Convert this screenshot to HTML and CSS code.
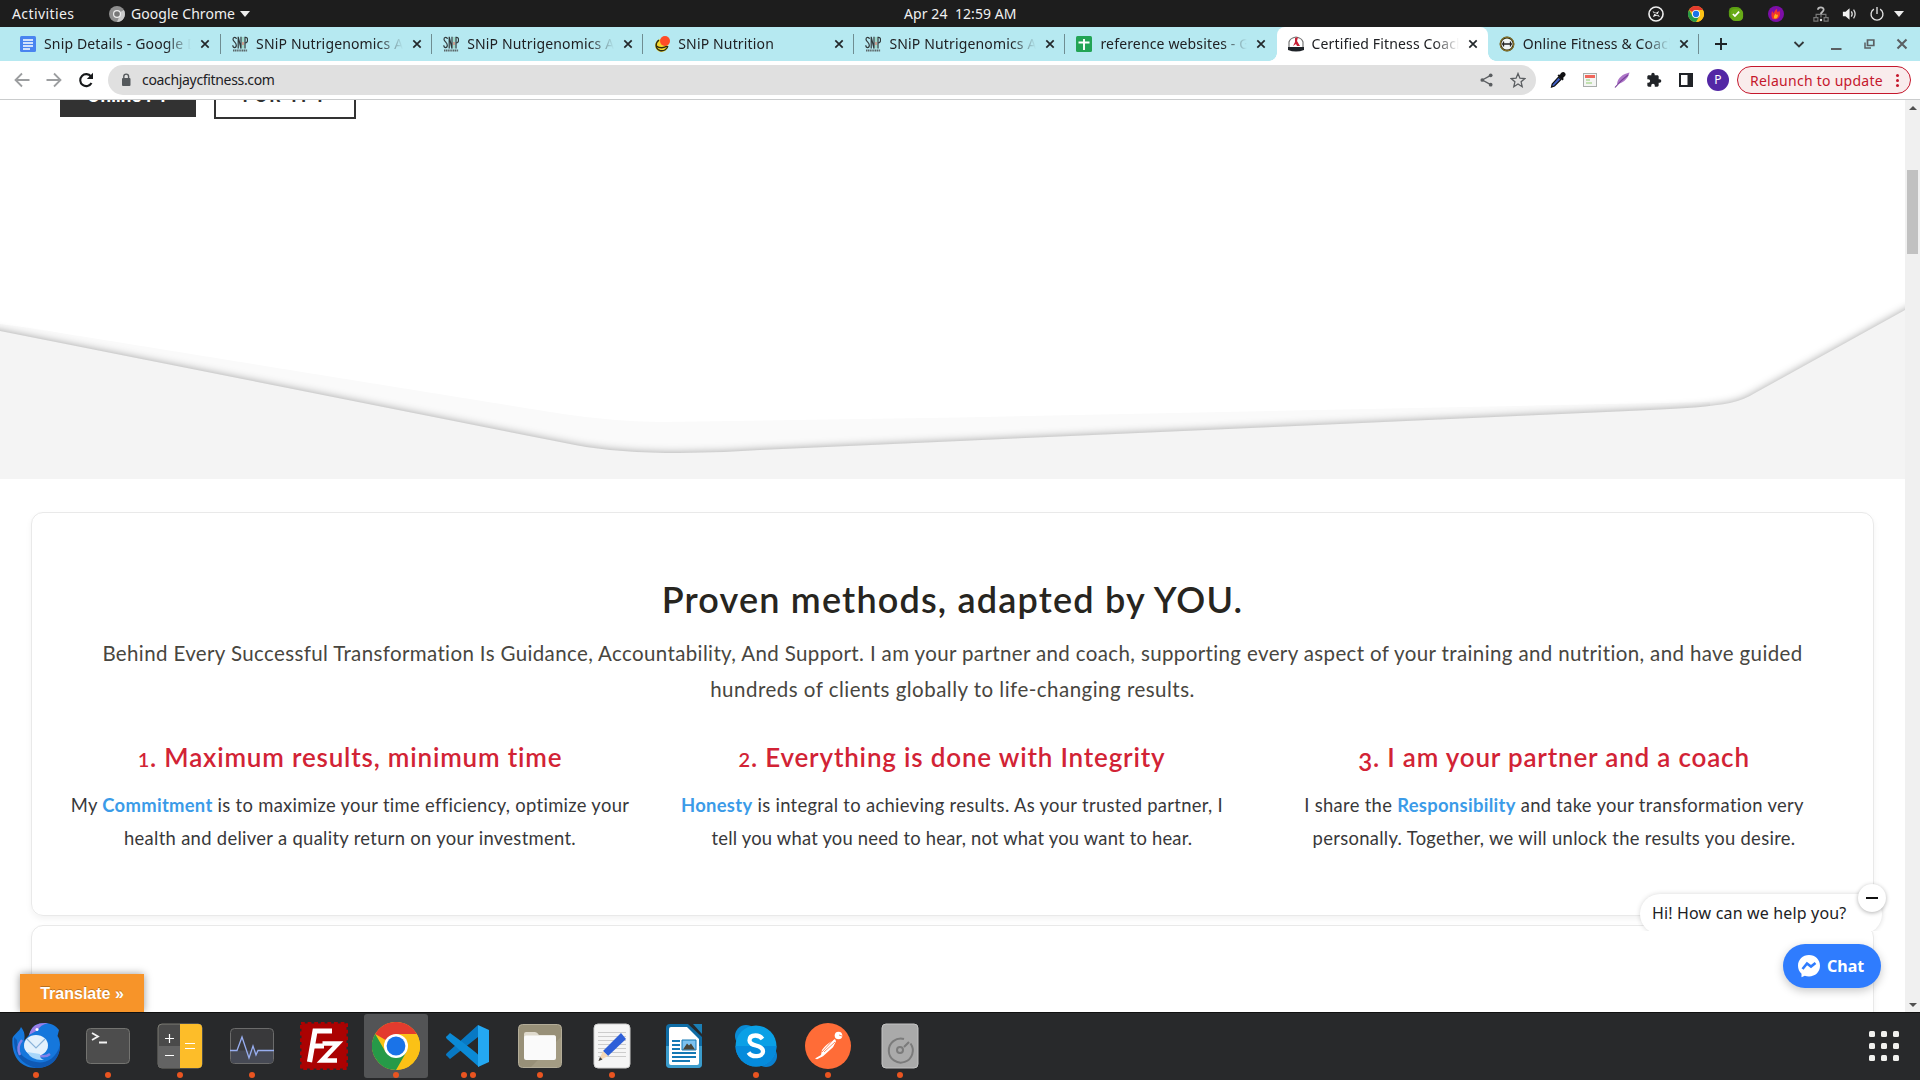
FILE: index.html
```html
<!DOCTYPE html>
<html lang="en">
<head>
<meta charset="utf-8">
<title>Certified Fitness Coach</title>
<link rel="stylesheet" href="styles.css">
</head>
<body>
<svg class="defs" width="0" height="0" aria-hidden="true">
  <symbol id="close" viewBox="0 0 10 10"><path d="M1.3 1.3 8.7 8.7M8.7 1.3 1.3 8.7" stroke="#23282b" stroke-width="1.7"/></symbol>
  <symbol id="chrome" viewBox="0 0 48 48">
    <circle cx="24" cy="24" r="24" fill="#fbc116"/>
    <path d="M24 24 3.2 12A24 24 0 0 1 44.8 12Z" fill="#e33b2e"/>
    <path d="M24 12H44.8A24 24 0 0 1 24 48L34.4 30Z" fill="#fbc116"/>
    <path d="M3.2 12 13.6 30 24 36 34.4 30 24 48A24 24 0 0 1 3.2 12Z" fill="#269a48"/>
    <circle cx="24" cy="24" r="12" fill="#fff"/><circle cx="24" cy="24" r="9.4" fill="#1a73e8"/>
  </symbol>
  <symbol id="snip" viewBox="0 0 16 16">
    <path d="M4.300 3C4.300 .8 1 .8 1 3.200c0 2.300 3.300 3.300 3.300 6C4.300 12.300 .8 12.300 .8 9.300M6.200 12.500V.8L9 12.500V.8M13 12.500V1.300c3.400-.7 3.400 6 0 5.600" fill="none" stroke="#30393b" stroke-width="1.200"/>
    <path d="M11 1v11.500" stroke="#8fd3b4" stroke-width="1.200"/><path d="M11 6v3" stroke="#e57a6c" stroke-width="1.200"/>
    <path d="M1 14.500h14.500" stroke="#5a6668" stroke-width="2" stroke-dasharray="1.300 .5"/>
  </symbol>
</svg>

<header class="topbar">
  <span class="activities">Activities</span>
  <svg class="appicon" viewBox="0 0 16 16"><circle cx="8" cy="8" r="8" fill="#8e8e8e"/><path d="M8 8 14.900 4A8 8 0 0 1 8 16L11 9Z" fill="#c9c9c9"/><circle cx="8" cy="8" r="4" fill="#eee"/><circle cx="8" cy="8" r="2.800" fill="#777"/></svg>
  <span class="appname">Google Chrome</span>
  <svg class="tri" viewBox="0 0 10 6"><path d="M0 0H10L5 6Z" fill="#eee"/></svg>
  <span class="clock">Apr 24&nbsp; 12:59 AM</span>
  <div class="tray">
    <svg viewBox="0 0 18 18"><circle cx="9" cy="9" r="7.900" fill="none" stroke="#eee" stroke-width="1.800"/><path d="M5 5.500 9 7.500 12.500 5.500 11 9 13.500 12.500 9.500 11 5.500 12.500 7 9Z" fill="#eee"/><path d="M6.500 8 11.500 10" stroke="#222" stroke-width="1.200"/></svg>
    <svg viewBox="0 0 48 48"><use href="#chrome"/></svg>
    <svg viewBox="0 0 18 18"><rect x="1" y="1" width="14" height="14" rx="5" fill="#5a9e12"/><rect x="3" y="3" width="14" height="14" rx="5" fill="#68ab17"/><path d="m5.500 9 2.300 2.300L12.500 6.300" fill="none" stroke="#fff" stroke-width="1.900"/></svg>
    <svg viewBox="0 0 18 18"><circle cx="9" cy="9" r="9" fill="#7d0ea8"/><path d="M5.500 15C3 12 4 8 4.500 5.500c1 1 1.500 2 1.800 3C7 6.500 8 4.500 10 3c0 1.700.3 3 .8 4 .8-.5 1.500-1.200 2-2C14.500 9 13.500 14 9 15Z" fill="#f2332d"/><path d="M7 14c-1-2 .5-4 1.500-5.500.5 1.500 1 1.500 2.500 1 .5 2-.5 4-2 4.500Z" fill="#ffb017"/></svg>
    <svg class="net" viewBox="0 0 18 18"><path d="M3.500 13v-3.500h11V13M9 7v6" fill="none" stroke="#777" stroke-width="1.300"/><path d="M1 13h4.500v4H1ZM12.500 13H17v4h-4.500Z" fill="none" stroke="#777" stroke-width="1.300"/><path d="M5.500 4.200C5.700.500 12.200.600 12 4.300c0 2.300-3 2.200-3 5" fill="none" stroke="#bbb" stroke-width="2"/><path d="M7.800 14.500h2.400V17H7.800Z" fill="#ddd"/></svg>
    <svg class="vol" viewBox="0 0 18 18"><path d="M1 6.500h3L8.500 2.500v13L4 11.500H1Z" fill="#f2f2f2"/><path d="M10.500 6q2 3 0 6M13 4q3.500 5 0 10" fill="none" stroke="#ddd" stroke-width="1.400"/></svg>
    <svg class="pow" viewBox="0 0 18 18"><path d="M5.500 3.500a6.700 6.700 0 1 0 7 0M9 1v8" fill="none" stroke="#e4e4e4" stroke-width="1.500"/></svg>
    <svg class="tri last" viewBox="0 0 10 6"><path d="M0 0H10L5 6Z" fill="#eee"/></svg>
  </div>
</header>

<nav class="tabs">
  <div class="tab"><svg class="fav" viewBox="0 0 16 16"><rect width="16" height="16" rx="1.500" fill="#4a84f0"/><path d="M3 4h10M3 7h10M3 10h10M3 13h7" stroke="#fff" stroke-width="1.600"/></svg><span class="title">Snip Details - Google Docs</span><svg class="x"><use href="#close"/></svg></div>
  <div class="tab"><svg class="fav"><use href="#snip"/></svg><span class="title">SNiP Nutrigenomics App</span><svg class="x"><use href="#close"/></svg></div>
  <div class="tab"><svg class="fav"><use href="#snip"/></svg><span class="title">SNiP Nutrigenomics App</span><svg class="x"><use href="#close"/></svg></div>
  <div class="tab"><svg class="fav" viewBox="0 0 16 16"><circle cx="7.500" cy="9.500" r="6.500" fill="#f4d72b"/><path d="M5 4C1 7 1 13 6 14.500c4 1 7.500-1.500 7.800-4.500M2.500 10c3 2.500 8 2 10.500 0" fill="none" stroke="#2c2a10" stroke-width="1.400"/><circle cx="11" cy="5" r="5" fill="#ff4b26"/></svg><span class="title">SNiP Nutrition</span><svg class="x"><use href="#close"/></svg></div>
  <div class="tab"><svg class="fav"><use href="#snip"/></svg><span class="title">SNiP Nutrigenomics App</span><svg class="x"><use href="#close"/></svg></div>
  <div class="tab nosep"><svg class="fav" viewBox="0 0 16 16"><rect width="16" height="16" rx="1.500" fill="#23a455"/><path d="M8 3v11M2.500 6.500h11" stroke="#fff" stroke-width="1.900"/></svg><span class="title">reference websites - Google</span><svg class="x"><use href="#close"/></svg></div>
  <div class="tab active"><svg class="fav" viewBox="0 0 16 16"><path d="M1 11V6q1-4 7-5 6 1 7 5v5" fill="none" stroke="#777" stroke-width="1.200"/><path d="M0 11h16v3q-8 3-16 0Z" fill="#1f2328"/><path d="M7 2 10 1 9 5l3 5H9L8 8l-3 2 2-4Z" fill="#c92036"/></svg><span class="title">Certified Fitness Coach</span><svg class="x"><use href="#close"/></svg></div>
  <div class="tab"><svg class="fav" viewBox="0 0 16 16"><circle cx="8" cy="8" r="6.500" fill="#f1f6f5" stroke="#34300f" stroke-width="1.800"/><circle cx="8" cy="8" r="6.900" fill="none" stroke="#b09336" stroke-width=".8"/><path d="M4.500 5.500v5M11.500 5.500v5M3 8h10" stroke="#222" stroke-width="1.300"/></svg><span class="title">Online Fitness &amp; Coaching</span><svg class="x"><use href="#close"/></svg></div>
  <svg class="plus" viewBox="0 0 12 12"><path d="M6 0v12M0 6h12" stroke="#1d2326" stroke-width="1.900"/></svg>
  <div class="winbtns">
    <svg viewBox="0 0 12 12"><path d="m1.500 4 4.500 4.500L10.500 4" fill="none" stroke="#33383a" stroke-width="1.800"/></svg>
    <svg viewBox="0 0 12 12"><path d="M1 11h10.500" stroke="#5a5f62" stroke-width="2"/></svg>
    <svg viewBox="0 0 12 12"><path d="M4.500 2h6.300v5.500H4.500Z" fill="none" stroke="#5a5f62" stroke-width="1.700"/><path d="M2 4.500V10h6" fill="none" stroke="#5a5f62" stroke-width="1.500"/></svg>
    <svg viewBox="0 0 12 12"><path d="m1.500 1.500 9 9m0-9-9 9" stroke="#5a5f62" stroke-width="2.100"/></svg>
  </div>
</nav>

<div class="toolbar">
  <svg class="nav" viewBox="0 0 16 16"><path d="M15.500 8H2M8 1.500 1.500 8 8 14.500" fill="none" stroke="#9c9ea0" stroke-width="1.800"/></svg>
  <svg class="nav" viewBox="0 0 16 16"><path d="M.5 8H14M8 1.500 14.500 8 8 14.500" fill="none" stroke="#9c9ea0" stroke-width="1.800"/></svg>
  <svg class="nav" viewBox="0 0 16 16"><path d="M13.500 11A6 6 0 1 1 13 4.500" fill="none" stroke="#17191b" stroke-width="2.100"/><path d="M15 .8V7H8.800Z" fill="#17191b"/></svg>
  <div class="omnibox">
    <svg class="lock" viewBox="0 0 10 14"><rect x="1" y="5" width="8.500" height="8" rx="1" fill="#55595c"/><path d="M2.800 5.500V3.500a2.400 2.400 0 0 1 4.800 0v2" fill="none" stroke="#55595c" stroke-width="1.400"/></svg>
    <span class="url">coachjaycfitness.com</span>
    <svg class="share" viewBox="0 0 14 16"><path d="M11.500 3 2.500 8l9 5" fill="none" stroke="#5a5d60" stroke-width="1.400"/><circle cx="11.500" cy="3" r="2" fill="#5a5d60"/><circle cx="2.500" cy="8" r="2" fill="#5a5d60"/><circle cx="11.500" cy="13" r="2" fill="#5a5d60"/></svg>
    <svg class="star" viewBox="0 0 16 16"><path d="m8 1.500 1.900 4.700 4.900.4-3.700 3.200 1.100 4.900L8 12l-4.200 2.700 1.100-4.900L1.200 6.600l4.900-.4Z" fill="none" stroke="#5a5d60" stroke-width="1.300"/></svg>
  </div>
  <div class="exts">
    <svg viewBox="0 0 16 16"><path d="M11 1q2.500-2 4 0 1.500 1.500-.5 3.500l-1.500 1.500.8 1L12.500 8.500 7.500 3.500 9 2.200l.8.800Z" fill="#101012"/><path d="M8.500 5 11 7.500 4.500 14 1.500 15 2.200 12Z" fill="#4060c8" stroke="#101012" stroke-width="1.200"/></svg>
    <svg viewBox="0 0 16 16"><rect x="1.500" y="1.500" width="13" height="13" fill="#f4f5f4" stroke="#a9adab" stroke-width="1"/><path d="M3 4.500h10" stroke="#f0675c" stroke-width="3"/><path d="M4 8h4M4 11h6" stroke="#8fce6c" stroke-width="1.200"/></svg>
    <svg viewBox="0 0 16 16"><path d="M15.500.5C9 2 3.500 5.500 3 12c5-.5 11-4.500 12.500-11.500Z" fill="#ad76c8"/><path d="M1 15.500Q7 8 14 3" fill="none" stroke="#7a419b" stroke-width="1.200"/></svg>
    <svg viewBox="0 0 24 24"><path d="M20.500 11H19V7c0-1.100-.9-2-2-2h-4V3.500a2.500 2.500 0 0 0-5 0V5H4c-1.100 0-2 .9-2 2v3.800h1.500a2.700 2.700 0 0 1 0 5.400H2V20c0 1.100.9 2 2 2h3.800v-1.500a2.700 2.700 0 0 1 5.400 0V22H17c1.100 0 2-.9 2-2v-4h1.500a2.500 2.500 0 0 0 0-5Z" fill="#202327"/></svg>
    <svg viewBox="0 0 16 16"><path d="M1 1h14v14H1ZM3 3v10h6.500V3Z" fill="#202327" fill-rule="evenodd"/></svg>
    <span class="avatar">P</span>
  </div>
  <div class="relaunch"><span>Relaunch to update</span><i class="dots"></i></div>
</div>

<main class="view">
  <div class="page">
    <section class="hero">
      <div class="buttons"><a class="btn dark">Online PT</a><a class="btn line">FOR TPT</a></div>
      <svg class="wave" viewBox="0 0 1905 379">
        <path d="M0 224 30 228 563 314Q610 321 660 322L735 321 960 317.500 1710 302V379H0Z" fill="#fafafa"/>
        <path class="edge" d="M-20 227 0 231 575 345Q618 353 680 353 720 353 760 350L960 341 1640 310.500Q1705 308 1730 303 1744 300 1755 293L1905 210 1925 199V400H-20Z" fill="#f4f4f4"/>
      </svg>
    </section>
    <section class="card">
      <h2>Proven methods, adapted by YOU.</h2>
      <p class="lead">Behind Every Successful Transformation Is Guidance, Accountability, And Support. I am your partner and coach, supporting every aspect of your training and nutrition, and have guided<br><span class="loose">hundreds of clients globally to life-changing results.</span></p>
      <div class="cols">
        <div><h3><span class="num">1</span>. Maximum results, minimum time</h3><p>My <b>Commitment</b> is to maximize your time efficiency, optimize your<br>health and deliver a quality return on your investment.</p></div>
        <div><h3><span class="num">2</span>. Everything is done with Integrity</h3><p><b>Honesty</b> is integral to achieving results. As your trusted partner, I<br><span class="tight">tell you what you need to hear, not what you want to hear.</span></p></div>
        <div><h3><span class="num low">3</span>. I am your partner and a coach</h3><p>I share the <b>Responsibility</b> and take your transformation very<br>personally. Together, we will unlock the results you desire.</p></div>
      </div>
    </section>
    <section class="card next"></section>
  </div>
  <div class="scroll"><i class="up"></i><i class="thumb"></i><i class="down"></i></div>

  <a class="translate">Translate »</a>
  <div class="hello"><div class="bubble">Hi! How can we help you?</div></div>
  <div class="minus"></div>
  <a class="chat"><svg viewBox="0 0 24 24"><path d="M12 1C5.700 1 1 5.600 1 11.800c0 3.300 1.300 6 3.500 7.900v3.500l3.300-1.400c1.300.4 2.700.6 4.200.6 6.300 0 11-4.400 11-10.600S18.300 1 12 1Z" fill="#fff"/><path d="m5.500 15 4.500-5.500 4 3 4.500-3.500" fill="none" stroke="#2f7cfe" stroke-width="2.600"/></svg><span>Chat</span></a>
</main>

<footer class="dock">
  <div class="app run"><svg viewBox="0 0 48 48"><path d="M9 5C7 10 3 11 .5 16-1 34 8 46 24 46S48 35 48 23c0-4-1-7-2.500-9L47 8C42 0 29-1 22 4q-3 3-5 9L12 19Q14 11 9 5Z" fill="#1577dc"/><path d="M2 15Q1 40 24 46C42 46 48 34 48 23 44 38 32 42 24 40 12 38 5 31 5 18Z" fill="#0f59b4"/><path d="M18 10Q21 0 36 1 28 3 26 8L17 13Z" fill="#9a7fe8"/><path d="M10 18Q4 25 8 33M38 32Q33 36 26 33" fill="none" stroke="#8382e8" stroke-width="2.500"/><ellipse cx="24" cy="23.500" rx="12" ry="10.500" fill="#e4f1fc"/><path d="M15 17 24 26 33 17" fill="none" stroke="#8ab3da" stroke-width="1.200"/><path d="M15 30Q20 39 32 38 27 36 28 32Z" fill="#a8d6fa"/><circle cx="25" cy="7.500" r="1.500" fill="#fff"/></svg><i></i></div>
  <div class="app run"><svg viewBox="0 0 48 48"><rect x="2.500" y="6.500" width="43" height="35" rx="4" fill="#4d4d4d" stroke="#737370"/><path d="m8 11 6 3.500L8 18M15 20.500h8" fill="none" stroke="#f2f2f2" stroke-width="1.800"/></svg><i></i></div>
  <div class="app run"><svg viewBox="0 0 48 48"><rect x="2" y="2" width="44" height="44" rx="4" fill="#4a4a4a" stroke="#8a8a80" stroke-width=".8"/><path d="M2 24h22v22H6q-4 0-4-4Z" fill="#636363"/><path d="M24 2h18q4 0 4 4v36q0 4-4 4H24Z" fill="#fdbd29"/><path d="M9 16.500h9M13.500 12v9M9 33.500h9M29 21.500h10M29 26.500h10" stroke="#fff" stroke-width="1.200"/></svg><i></i></div>
  <div class="app run"><svg viewBox="0 0 48 48"><rect x="2.500" y="6.500" width="43" height="35" rx="4" fill="#39393b" stroke="#6b6b6b"/><path d="M3 28.500h42V38q0 3-3 3H6q-3 0-3-3Z" fill="#464954"/><path d="M2 28.500h7L14 15l7 21 4-12 3 9 2-4.500h16" fill="none" stroke="#98aef0" stroke-width="1.300"/></svg><i></i></div>
  <div class="app"><svg viewBox="0 0 48 48"><rect x="1.500" y="1.500" width="45" height="45" fill="#ab0202"/><rect x="1" y="1" width="46" height="46" fill="none" stroke="#ab0202" stroke-width="2.400" stroke-dasharray="3.800 2.800"/><path d="M9.500 40 15 9H32" fill="none" stroke="#fff" stroke-width="5.200"/><path d="M12 24H24" stroke="#fff" stroke-width="5"/><path d="M22.500 21.500H38L22 38.500H37" fill="none" stroke="#fff" stroke-width="4.600"/></svg></div>
  <div class="app run current"><svg><use href="#chrome"/></svg><i></i></div>
  <div class="app run"><svg viewBox="0 0 48 48"><path d="M34 3v12L6 37 3 34q-2-1 0-3Z" fill="#0879c4"/><path d="M3 14 6 11Q35 32 35 34V45L3 17q-2-2 0-3Z" fill="#0b8ad6"/><path d="M34 3 45 8V40L34 45Z" fill="#24a8f2"/></svg><i></i><i></i></div>
  <div class="app run"><svg viewBox="0 0 48 48"><rect x="2.500" y="2.500" width="43" height="43" rx="4" fill="#989078" stroke="#b3ac98"/><path d="M45 15V41q0 4-4 4H15Z" fill="#a39b83"/><path d="M8 12q0-2 2-2h9q2 0 4 3h15q2 0 2 3v4H8Z" fill="#dfdacd"/><rect x="8" y="13.500" width="32" height="24.500" rx="2" fill="#fafafa"/></svg><i></i></div>
  <div class="app run"><svg viewBox="0 0 48 48"><rect x="6" y="2" width="36" height="44" rx="4" fill="#f5f5f5" stroke="#cfcfcf"/><path d="M10 10.500h28M10 14.500h28M10 18.500h28M10 22.500h28M10 26.500h28M10 30.500h28M10 34.500h28" stroke="#ccc"/><path d="M15 29 33 11l5 6-18 17Z" fill="#2e5fd8"/><path d="m15 29 5 5-9.500 5Z" fill="#f6d8b5"/><path d="m12 35 2.500 2.500-4 1.500Z" fill="#444"/></svg><i></i></div>
  <div class="app"><svg viewBox="0 0 48 48"><path d="M10 2H28L42 15V42q0 4-4 4H10q-4 0-4-4V6q0-4 4-4Z" fill="#0f6ca5"/><path d="M6 24H42V42q0 4-4 4H10q-4 0-4-4Z" fill="#3b9ccc"/><path d="M33 2h9v10Z" fill="#1b7fb6"/><path d="M11 5H27L39 17V41q0 2-2 2H11q-2 0-2-2V7q0-2 2-2Z" fill="#fff"/><path d="M12 19h8M12 23h8M12 27h8M12 31h24M12 35h24M12 39h18" stroke="#1579b4" stroke-width="2"/><path d="M22 18h14v10H22Z" fill="#7dc2ef" stroke="#1579b4"/><path d="m23 27.500 4-6 2 2 2-2 4 6Z" fill="#4a4538"/></svg></div>
  <div class="app run"><svg viewBox="0 0 48 48"><circle cx="14" cy="14" r="11" fill="#0a8ad4"/><circle cx="34" cy="34" r="11" fill="#0a80d0"/><circle cx="24" cy="24" r="20.500" fill="#0aa0e6"/><path d="M3.500 24a20.500 20.500 0 0 0 41 0Z" fill="#058bdc"/><path d="M30.500 17Q28 13.500 23.500 13.500 17.500 13.500 17.500 18.500C17.500 25 31 22 31 29.500 31 35 20 36 16.500 30.500" fill="none" stroke="#fff" stroke-width="4.300"/></svg><i></i></div>
  <div class="app run"><svg viewBox="0 0 48 48"><circle cx="24" cy="24" r="23" fill="#ff6c37"/><circle cx="34.500" cy="13.500" r="3.800" fill="#fff"/><path d="M31 17Q21 23 18 28l-1 5-6 3.500 2 .8 6-3 10-9 3-6Z" fill="#fff"/><path d="M29 18 18 30M31 20 20 30M35 13l3 1" stroke="#ff6c37" stroke-width=".8"/></svg><i></i></div>
  <div class="app run"><svg viewBox="0 0 48 48"><rect x="6" y="2" width="36" height="44" rx="4" fill="#aaa" stroke="#c4c4c4"/><path d="M34.500 21.500A12 12 0 1 1 28 17M28 25l5-5M36 28" fill="none" stroke="#7b7b7b" stroke-width="2"/><circle cx="24" cy="28" r="3" fill="none" stroke="#7b7b7b" stroke-width="2"/></svg><i></i></div>
  <div class="grid"><b></b><b></b><b></b><b></b><b></b><b></b><b></b><b></b><b></b></div>
</footer>
</body>
</html>
```
FILE: styles.css
```css
* { box-sizing: border-box; }
body {
  margin: 0;
  width: 1920px;
  height: 1080px;
  overflow: hidden;
  display: flex;
  flex-direction: column;
  font-family: "Noto Sans", sans-serif;
  font-size: 14px;
  color: #202124;
  background: #fff;
}
.defs { position: absolute; }
i { font-style: normal; }
svg { display: block; flex: none; }

.topbar {
  height: 27px;
  flex: none;
  background: #1d1d1d;
  color: #f0f0f0;
  display: flex;
  align-items: center;
  padding-left: 12px;
  white-space: nowrap;
}
.activities { width: 97px; letter-spacing: .4px; }
.appicon { width: 16px; height: 16px; margin-right: 6px; }
.appname { width: 109px; letter-spacing: .05px; }
.tri { width: 10px; height: 6px; }
.clock { margin-left: 654px; width: 130px; letter-spacing: .08px; }
.tray { display: flex; align-items: center; margin-left: 614px; }
.tray svg { width: 16px; height: 16px; margin-right: 24px; }
.tray .net { margin-right: 13px; margin-left: 5px; }
.tray .vol { margin-right: 11px; }
.tray .pow { margin-right: 9px; }
.tray .tri { width: 10px; height: 6px; margin: 0; }

.tabs {
  height: 34px;
  flex: none;
  background: #b6e9f1;
  display: flex;
  padding-left: 10px;
  align-items: center;
}
.tab {
  width: 211.1px;
  height: 34px;
  flex: none;
  display: flex;
  align-items: center;
  padding-left: 11px;
  background: linear-gradient(#6f8d92, #6f8d92) right center / 1px 20px no-repeat;
}
.tab:first-child { padding-left: 10px; }
.fav { width: 16px; height: 16px; margin-right: 8px; }
.title {
  width: 147px;
  margin-top: -1px;
  overflow: hidden;
  white-space: nowrap;
  letter-spacing: .15px;
  -webkit-mask-image: linear-gradient(90deg, #000 122px, transparent 147px);
  mask-image: linear-gradient(90deg, #000 122px, transparent 147px);
}
.x { width: 10px; height: 10px; margin-left: 9px; }
.tab.nosep { background: none; }
.tab.active {
  position: relative;
  background: #fff;
  border-radius: 8px 8px 0 0;
}
.tab.active::before, .tab.active::after {
  content: "";
  position: absolute;
  bottom: 0;
  width: 8px;
  height: 8px;
}
.tab.active::before { left: -8px; background: radial-gradient(circle at 0 0, transparent 7.5px, #fff 8px); }
.tab.active::after { right: -8px; background: radial-gradient(circle at 100% 0, transparent 7.5px, #fff 8px); }
.plus { width: 12px; height: 12px; margin-left: 16px; }
.winbtns { display: flex; margin-left: auto; gap: 21px; padding-right: 12px; }
.winbtns svg { width: 12px; height: 12px; }
.winbtns svg:first-child { margin-right: 4px; }

.toolbar {
  height: 39px;
  flex: none;
  display: flex;
  align-items: center;
  padding: 0 9px 0 14px;
  border-bottom: 1px solid #cacccd;
}
.nav { width: 16px; height: 16px; margin-right: 16px; }
.omnibox {
  width: 1428px;
  height: 30px;
  border-radius: 15px;
  background: #e0e0e0;
  display: flex;
  align-items: center;
  padding: 0 10px 0 13px;
  margin-left: -2px;
}
.lock { width: 10px; height: 14px; }
.url { margin: -2px auto 0 11px; letter-spacing: -.33px; }
.share { width: 13px; height: 16px; margin-right: 17px; }
.star { width: 16px; height: 16px; }
.exts { display: flex; align-items: center; gap: 16px; margin-left: 14px; }
.exts svg { width: 16px; height: 16px; }
.avatar {
  width: 22px;
  height: 22px;
  margin-left: -3px;
  border-radius: 50%;
  background: #5327a5;
  color: #fff;
  font-size: 12px;
  line-height: 22px;
  text-align: center;
}
.relaunch {
  margin-left: auto;
  width: 174px;
  height: 28px;
  border: 1px solid #c5172c;
  border-radius: 14px;
  background: #f9ecec;
  color: #c5172c;
  display: flex;
  align-items: center;
  justify-content: space-between;
  padding: 0 11px 0 12px;
  white-space: nowrap;
  letter-spacing: .26px;
}
.dots { width: 3px; height: 3px; border-radius: 50%; background: #c5172c; box-shadow: 0 -5px #c5172c, 0 5px #c5172c; }

.view { height: 912px; flex: none; position: relative; display: flex; overflow: hidden; }
.page { width: 1905px; height: 912px; overflow: hidden; }
.hero { height: 379px; overflow: hidden; display: grid; background: #fff; }
.hero > * { grid-area: 1 / 1; }
.buttons {
  display: flex;
  align-items: flex-start;
  gap: 18px;
  padding-left: 60px;
  margin-top: -33px;
  font: 700 17px Inter, sans-serif;
}
.btn { text-align: center; letter-spacing: .2px; }
.btn.dark { width: 136px; height: 50px; line-height: 59px; background: #323232; color: #fff; }
.btn.line { width: 142px; height: 52px; line-height: 55px; border: 2px solid #323232; color: #323232; letter-spacing: 1.8px; }
.wave { width: 1905px; height: 379px; }
.edge { filter: drop-shadow(0 0 4px rgba(0, 0, 0, .36)); }

.card {
  width: 1843px;
  height: 404px;
  margin: 33px 0 0 31px;
  padding: 64px 17px 0;
  border: 1px solid #e9e9e9;
  border-radius: 12px;
  box-shadow: 0 3px 6px rgba(0, 0, 0, .05);
  font-family: Lato, sans-serif;
  text-align: center;
  white-space: nowrap;
}
.card.next { margin-top: 9px; }
.card h2 { margin: 0; font-size: 36px; line-height: 44px; font-weight: 600; color: #272520; letter-spacing: 1.18px; }
.lead { margin: 14px 0 0; font-size: 20.5px; line-height: 36px; color: #484640; letter-spacing: .37px; }
.loose { letter-spacing: .48px; }
.cols { display: grid; grid-template-columns: repeat(3, 602px); margin-top: 32px; }
.cols h3 { margin: 0; font-size: 26px; line-height: 36px; font-weight: 600; color: #d22335; letter-spacing: .82px; }
.num { font-size: 20px; line-height: 0; }
.num.low { font-size: 24px; vertical-align: -4px; }
.cols p { margin: 14px 0 0; font-size: 18.4px; line-height: 33px; color: #38383a; letter-spacing: .31px; }
.tight { letter-spacing: .2px; }
.cols b { color: #3b9be8; }

.scroll { width: 15px; background: #f0f0f0; display: flex; flex-direction: column; align-items: center; padding: 5px 0; }
.up { border: 4px solid transparent; border-bottom-color: #505050; border-top: 0; margin-top: 1px; }
.down { border: 4px solid transparent; border-top-color: #505050; border-bottom: 0; margin-top: auto; }
.thumb { width: 11px; height: 84px; background: #c1c1c1; margin-top: 60px; }

.translate {
  position: absolute;
  left: 20px;
  bottom: 0;
  width: 124px;
  height: 38px;
  background: #f79429;
  box-shadow: 0 0 8px rgba(0, 0, 0, .4);
  color: #fff;
  font: 700 16px/39px "Liberation Sans", sans-serif;
  text-align: center;
  text-shadow: 0 -1px 0 rgba(0, 0, 0, .25);
}
.hello { position: absolute; left: 1634px; top: 786px; width: 253px; height: 45px; overflow: hidden; }
.bubble {
  margin: 8px 5px 0 6px;
  height: 40px;
  border-radius: 20px;
  background: #fff;
  box-shadow: 0 0 5px rgba(0, 0, 0, .16);
  padding-left: 12px;
  font-size: 16px;
  line-height: 38px;
  letter-spacing: .16px;
  white-space: nowrap;
}
.minus {
  position: absolute;
  left: 1858px;
  top: 784px;
  width: 28px;
  height: 28px;
  border-radius: 50%;
  background: linear-gradient(#111, #111) center / 12px 2px no-repeat, #fff;
  box-shadow: 0 1px 4px rgba(0, 0, 0, .3);
}
.chat {
  position: absolute;
  left: 1783px;
  top: 844px;
  width: 98px;
  height: 44px;
  border-radius: 22px;
  background: #2f7cfe;
  box-shadow: 0 3px 10px rgba(0, 0, 0, .22);
  display: flex;
  align-items: center;
  padding-left: 14px;
  gap: 6px;
  color: #fff;
  font-weight: 700;
  font-size: 16px;
}
.chat svg { width: 24px; height: 24px; }

.dock { height: 68px; flex: none; background: #28292b; border-top: 1px solid #111; display: flex; }
.app {
  width: 64px;
  height: 64px;
  margin: 1px 4px 0;
  padding-top: 8px;
  border-radius: 3px;
  display: flex;
  flex-wrap: wrap;
  justify-content: center;
  align-content: flex-start;
  column-gap: 3px;
  row-gap: 2px;
}
.app svg { width: 48px; height: 48px; margin: 0 8px; }
.app i { width: 6px; height: 6px; border-radius: 50%; background: #e95420; }
.app.current { background: #535456; }
.grid { margin: 18px 21px 0 auto; display: grid; grid-template-columns: repeat(3, 6px); grid-auto-rows: 6px; gap: 6px; }
.grid b { background: #f0f0ee; border-radius: 1.5px; }
```
